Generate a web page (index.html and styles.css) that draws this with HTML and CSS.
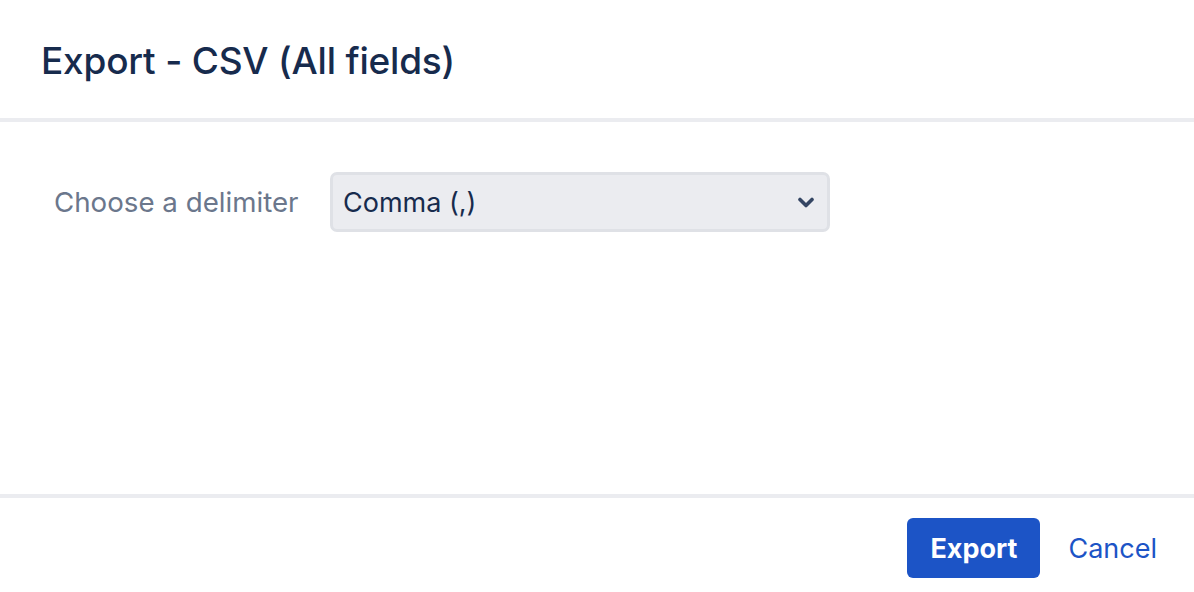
FILE: index.html
```html
<!DOCTYPE html>
<html>
<head>
<meta charset="utf-8">
<link rel="stylesheet" href="styles.css">
</head>
<body>
<div class="dialog">
  <header class="dialog-header">
    <h1 class="dialog-title">Export - CSV (All fields)</h1>
  </header>
  <main class="dialog-body">
    <label class="field-label" for="delim">Choose a delimiter</label>
    <div class="select">
      <span class="select-value">Comma (,)</span>
      <svg class="chevron" width="16" height="11" viewBox="0 0 16 11"><path d="M2 2.5 L8 8.5 L14 2.5" fill="none" stroke="#344563" stroke-width="3.6" stroke-linecap="round" stroke-linejoin="round"/></svg>
    </div>
  </main>
  <footer class="dialog-footer">
    <button class="btn-primary">Export</button>
    <a class="btn-link">Cancel</a>
  </footer>
</div>
</body>
</html>
```
FILE: styles.css
```css
html, body {
  margin: 0;
  padding: 0;
  background: #ffffff;
}
.dialog {
  width: 1194px;
  height: 592px;
  font-family: Inter, "Noto Sans", sans-serif;
  color: #172b4d;
}
.dialog-header {
  height: 122px;
  box-sizing: border-box;
  padding: 2px 41px 0;
  display: flex;
  align-items: center;
  border-bottom: 4px solid #ebecf0;
}
.dialog-title {
  margin: 0;
  font-size: 37px;
  font-weight: 500;
  color: #172b4d;
  letter-spacing: -0.2px;
}
.dialog-body {
  height: 372px;
  box-sizing: border-box;
  padding: 50px 0 0 54px;
  display: flex;
  align-items: flex-start;
}
.field-label {
  width: 276px;
  height: 60px;
  display: flex;
  align-items: center;
  font-size: 27.7px;
  color: #6b778c;
}
.select {
  width: 500px;
  height: 60px;
  box-sizing: border-box;
  border: 3px solid #dfe1e6;
  border-radius: 7px;
  background: #ebecf0;
  display: flex;
  align-items: center;
  justify-content: space-between;
  padding: 0 13px 0 10px;
}
.select-value {
  font-size: 27px;
  color: #172b4d;
}
.chevron {
  display: block;
}
.dialog-footer {
  border-top: 4px solid #ebecf0;
  box-sizing: border-box;
  height: 98px;
  padding: 20px 37px 0 0;
  display: flex;
  justify-content: flex-end;
  align-items: flex-start;
}
.btn-primary {
  width: 133px;
  height: 60px;
  border: none;
  border-radius: 6px;
  background: #1c54c6;
  color: #ffffff;
  font-family: Inter, "Noto Sans", sans-serif;
  font-size: 27px;
  font-weight: 700;
  padding: 0;
}
.btn-link {
  margin-left: 28px;
  height: 60px;
  display: flex;
  align-items: center;
  font-size: 27px;
  color: #1c54c6;
}
```
